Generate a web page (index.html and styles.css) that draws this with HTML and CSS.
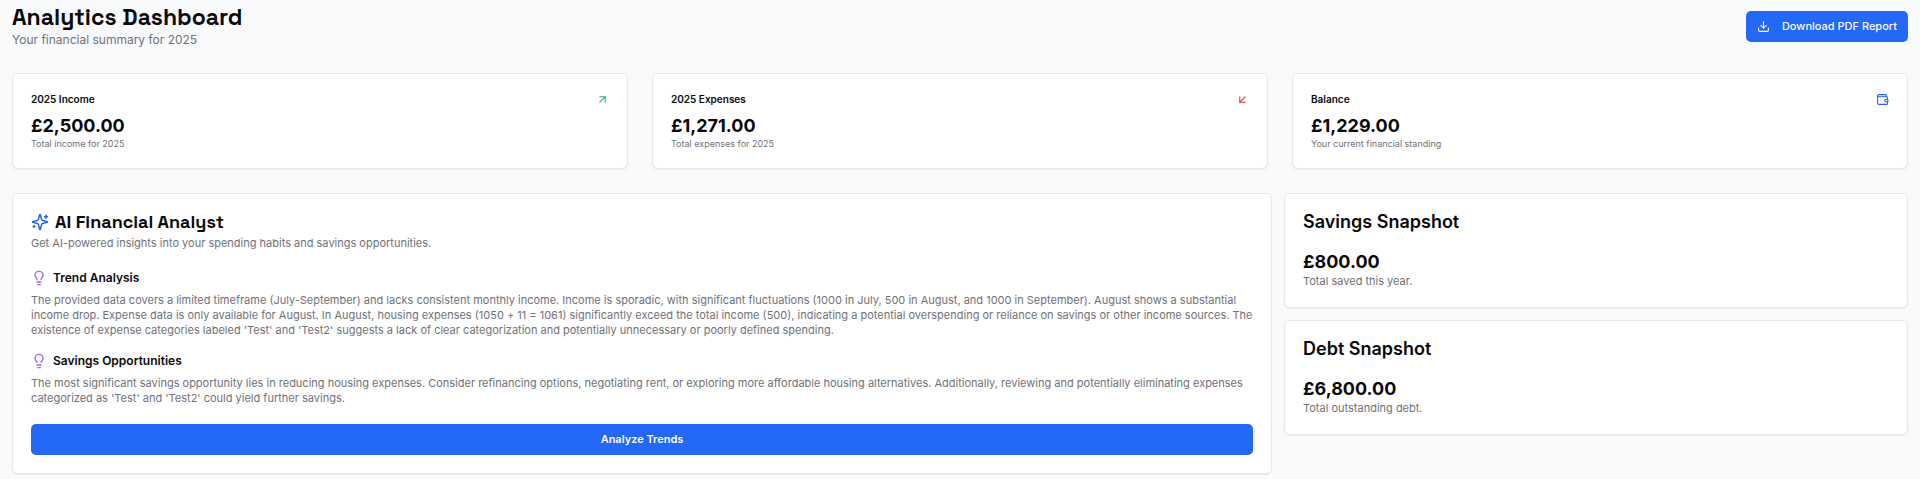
FILE: index.html
```html
<!DOCTYPE html>
<html lang="en">
<head>
  <meta charset="UTF-8">
  <title>Analytics Dashboard</title>
  <meta name="viewport" content="width=device-width, initial-scale=1.0">
  <link rel="stylesheet" href="styles.css">
</head>
<body>
  <main class="page">
    <header class="page-header">
      <div>
        <h1>Analytics Dashboard</h1>
        <p class="subtitle">Your financial summary for 2025</p>
      </div>
      <button type="button" class="btn">
        <svg class="icon-sm" viewBox="0 0 24 24"><path d="M21 15v4a2 2 0 0 1-2 2H5a2 2 0 0 1-2-2v-4"/><path d="m7 10 5 5 5-5"/><path d="M12 15V3"/></svg>
        Download PDF Report
      </button>
    </header>

    <section class="stats">
      <article class="card">
        <div class="stat-head">
          <h3>2025 Income</h3>
          <svg class="icon-sm green" viewBox="0 0 24 24"><path d="M7 7h10v10"/><path d="M7 17 17 7"/></svg>
        </div>
        <div class="amount">£2,500.00</div>
        <p class="stat-note">Total income for 2025</p>
      </article>
      <article class="card">
        <div class="stat-head">
          <h3>2025 Expenses</h3>
          <svg class="icon-sm red" viewBox="0 0 24 24"><path d="M17 7 7 17"/><path d="M17 17H7V7"/></svg>
        </div>
        <div class="amount">£1,271.00</div>
        <p class="stat-note">Total expenses for 2025</p>
      </article>
      <article class="card">
        <div class="stat-head">
          <h3>Balance</h3>
          <svg class="icon-sm blue" viewBox="0 0 24 24"><path d="M19 7V4a1 1 0 0 0-1-1H5a2 2 0 0 0 0 4h15a1 1 0 0 1 1 1v4h-3a2 2 0 0 0 0 4h3a1 1 0 0 0 1-1v-2a1 1 0 0 0-1-1"/><path d="M3 5v14a2 2 0 0 0 2 2h15a1 1 0 0 0 1-1v-4"/></svg>
        </div>
        <div class="amount">£1,229.00</div>
        <p class="stat-note">Your current financial standing</p>
      </article>
    </section>

    <section class="details">
      <article class="card analyst">
        <h2 class="analyst-title">
          <svg class="icon-lg blue" viewBox="0 0 24 24"><path d="M9.937 15.5A2 2 0 0 0 8.5 14.063l-6.135-1.582a.5.5 0 0 1 0-.962L8.5 9.936A2 2 0 0 0 9.937 8.5l1.582-6.135a.5.5 0 0 1 .963 0L14.063 8.5A2 2 0 0 0 15.5 9.937l6.135 1.581a.5.5 0 0 1 0 .964L15.5 14.063a2 2 0 0 0-1.437 1.437l-1.582 6.135a.5.5 0 0 1-.963 0z"/><path d="M20 3v4"/><path d="M22 5h-4"/><path d="M4 17v2"/><path d="M5 18H3"/></svg>
          AI Financial Analyst
        </h2>
        <p class="text">Get AI-powered insights into your spending habits and savings opportunities.</p>

        <div class="insight">
          <h3 class="insight-title">
            <svg class="icon-md purple" viewBox="0 0 24 24"><path d="M15 14c.2-1 .7-1.7 1.5-2.5 1-.9 1.5-2.2 1.5-3.5A6 6 0 0 0 6 8c0 1 .2 2.2 1.5 3.5.7.7 1.3 1.5 1.5 2.5"/><path d="M9 18h6"/><path d="M10 22h4"/></svg>
            Trend Analysis
          </h3>
          <p class="text">The provided data covers a limited timeframe (July-September) and lacks consistent monthly income. Income is sporadic, with significant fluctuations (1000 in July, 500 in August, and 1000 in September). August shows a substantial income drop. Expense data is only available for August. In August, housing expenses (1050 + 11 = 1061) significantly exceed the total income (500), indicating a potential overspending or reliance on savings or other income sources. The existence of expense categories labeled 'Test' and 'Test2' suggests a lack of clear categorization and potentially unnecessary or poorly defined spending.</p>
        </div>

        <div class="insight">
          <h3 class="insight-title">
            <svg class="icon-md purple" viewBox="0 0 24 24"><path d="M15 14c.2-1 .7-1.7 1.5-2.5 1-.9 1.5-2.2 1.5-3.5A6 6 0 0 0 6 8c0 1 .2 2.2 1.5 3.5.7.7 1.3 1.5 1.5 2.5"/><path d="M9 18h6"/><path d="M10 22h4"/></svg>
            Savings Opportunities
          </h3>
          <p class="text">The most significant savings opportunity lies in reducing housing expenses. Consider refinancing options, negotiating rent, or exploring more affordable housing alternatives. Additionally, reviewing and potentially eliminating expenses categorized as 'Test' and 'Test2' could yield further savings.</p>
        </div>

        <button type="button" class="btn btn-block">Analyze Trends</button>
      </article>

      <div class="snapshots">
        <article class="card">
          <h2>Savings Snapshot</h2>
          <div class="amount">£800.00</div>
          <p class="text">Total saved this year.</p>
        </article>
        <article class="card">
          <h2>Debt Snapshot</h2>
          <div class="amount">£6,800.00</div>
          <p class="text">Total outstanding debt.</p>
        </article>
      </div>
    </section>
  </main>
</body>
</html>
```

FILE: styles.css
```css
* {
  box-sizing: border-box;
}

body {
  margin: 0;
  font-family: Inter, "Liberation Sans", sans-serif;
  font-size: 11px;
  line-height: 15px;
  background: #f9fafc;
  color: #09090b;
}

h1, h2, h3, p {
  margin: 0;
}

svg {
  flex: none;
  fill: none;
  stroke: currentColor;
  stroke-width: 2;
  stroke-linecap: round;
  stroke-linejoin: round;
}

.icon-sm {
  width: 13px;
  height: 13px;
}

.icon-md {
  width: 16px;
  height: 16px;
}

.icon-lg {
  width: 18px;
  height: 18px;
}

.green {
  color: #22b06b;
}

.red {
  color: #d83a3a;
}

.blue {
  color: #2563eb;
}

.purple {
  color: #9b6be0;
}

.page {
  padding: 3px 12px 4px;
}

.page-header {
  display: flex;
  justify-content: space-between;
  align-items: center;
  margin-bottom: 24px;
}

h1 {
  font-family: "Space Grotesk", Inter, sans-serif;
  font-size: 23px;
  line-height: 28px;
  font-weight: 700;
}

.subtitle {
  font-size: 12px;
  line-height: 18px;
  color: #71717a;
}

.btn {
  display: flex;
  align-items: center;
  justify-content: center;
  gap: 12px;
  height: 31px;
  padding: 0 11px;
  border: none;
  border-radius: 5px;
  background: #2469f5;
  color: #f8fafc;
  font: 500 11px/15px Inter, "Liberation Sans", sans-serif;
  cursor: pointer;
}

.btn:hover {
  background: #1d5be0;
}

.btn-block {
  width: 100%;
  margin-top: 18px;
  font-weight: 600;
}

.card {
  padding: 18px;
  background: #fff;
  border: 1px solid #e5e7eb;
  border-radius: 6px;
  box-shadow: 0 1px 2px rgba(0, 0, 0, 0.06);
}

.stats {
  display: grid;
  grid-template-columns: repeat(3, 1fr);
  gap: 24px;
  margin-bottom: 24px;
}

.stat-head {
  display: flex;
  justify-content: space-between;
  align-items: center;
  margin-bottom: 6px;
}

.stat-head h3 {
  font-size: 10px;
  line-height: 15px;
  font-weight: 600;
}

.amount {
  font-size: 18px;
  line-height: 25px;
  font-weight: 700;
}

.stat-note {
  font-size: 9px;
  line-height: 12px;
  color: #71717a;
}

.text {
  color: #71717a;
}

.details {
  display: grid;
  grid-template-columns: repeat(3, 1fr);
  align-items: start;
  gap: 12px;
}

.analyst {
  grid-column: span 2;
}

h2 {
  font-size: 18px;
  line-height: 19px;
  font-weight: 600;
}

.analyst-title {
  display: flex;
  align-items: center;
  gap: 6px;
  margin-bottom: 5px;
  font-family: "Space Grotesk", Inter, sans-serif;
}

.insight {
  margin-top: 18px;
}

.insight + .insight {
  margin-top: 14px;
}

.insight-title {
  display: flex;
  align-items: center;
  gap: 6px;
  margin-bottom: 6px;
  font-size: 12px;
  line-height: 18px;
  font-weight: 600;
}

.snapshots {
  display: grid;
  gap: 12px;
}

.snapshots h2 {
  margin-bottom: 18px;
}
```
